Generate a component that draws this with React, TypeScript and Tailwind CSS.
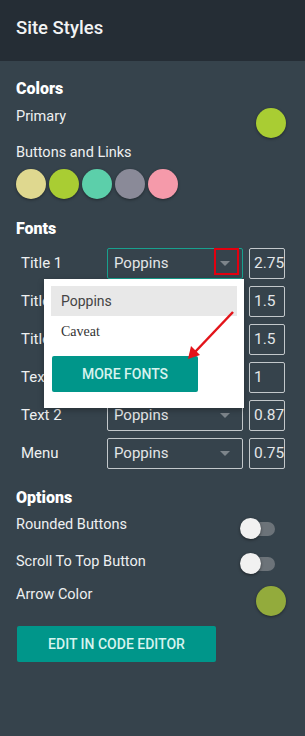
import React from "react";

const font = { fontFamily: "Roboto, 'Noto Sans', sans-serif" };

function Toggle() {
  return (
    <div className="relative w-[36px] h-[21px] flex items-center">
      <div className="absolute left-[2px] w-[33px] h-[14px] rounded-full bg-[#6c7379]" />
      <div className="absolute left-0 w-[21px] h-[21px] rounded-full bg-[#f1f1f1] shadow-[0_1px_3px_rgba(0,0,0,0.5)]" />
    </div>
  );
}

function Caret() {
  return (
    <svg width="10" height="6" viewBox="0 0 10 6" className="shrink-0">
      <path d="M0 0 L10 0 L5 5 Z" fill="#7d858b" />
    </svg>
  );
}

function FontRow({ label, value, active }: { label: string; value: string; active?: boolean }) {
  return (
    <div className="flex items-center h-[31px]">
      <div className="w-[91px] pl-[5px] text-[15px] text-[#eef0f1]">{label}</div>
      <div
        className={
          "w-[136px] h-[31px] border rounded-[2px] flex items-center justify-between pl-[6px] pr-[12px] " +
          (active ? "border-[#18a08e]" : "border-[#c3c8cb]")
        }
      >
        <span className="text-[15px] text-[#e3e6e8]">Poppins</span>
        <Caret />
      </div>
      <div className="ml-[6px] w-[36px] h-[31px] border border-[#c3c8cb] rounded-[2px] overflow-hidden flex items-center pl-[4px]">
        <span className="text-[15.5px] text-[#e3e6e8] whitespace-nowrap">{value}</span>
      </div>
    </div>
  );
}

export default function App() {
  return (
    <div className="relative w-[305px] h-[736px] bg-[#36434c] overflow-hidden" style={font}>
      <div className="h-[61px] bg-[#252d35] pl-4 pt-[16px]">
        <div className="text-[18.5px] leading-[24px] font-medium text-[#f2f3f4]">Site Styles</div>
      </div>
      <div className="pl-4 pr-[19px]">
        <div className="pt-[18px] text-[16px] leading-[20px] font-black text-white">Colors</div>
        <div className="mt-[9px] flex items-start justify-between">
          <span className="text-[14.5px] leading-[18px] text-[#eef0f1]">Primary</span>
          <div className="w-[30px] h-[30px] rounded-full bg-[#a9cd33] shadow-[0_1px_3px_rgba(0,0,0,0.4)]" />
        </div>
        <div className="mt-[6px] text-[14.5px] leading-[18px] text-[#eef0f1]">Buttons and Links</div>
        <div className="mt-[7px] flex gap-[3px]">
          {["#dfd88f", "#a9cd33", "#5ccfaa", "#8a8a98", "#f59aaa"].map((c) => (
            <div key={c} className="w-[30px] h-[30px] rounded-full shadow-[0_1px_3px_rgba(0,0,0,0.4)]" style={{ backgroundColor: c }} />
          ))}
        </div>
        <div className="mt-[20px] text-[16px] leading-[20px] font-black text-white">Fonts</div>
        <div className="mt-[9px] flex flex-col gap-[7px]">
          <FontRow label="Title 1" value="2.75" active />
          <FontRow label="Title 2" value="1.5" />
          <FontRow label="Title 3" value="1.5" />
          <FontRow label="Text 1" value="1" />
          <FontRow label="Text 2" value="0.875" />
          <FontRow label="Menu" value="0.75" />
        </div>
        <div className="mt-[19px] text-[16px] leading-[20px] font-black text-white">Options</div>
        <div className="mt-[8px] flex items-start justify-between pr-[10px]">
          <span className="text-[14.5px] leading-[18px] text-[#eef0f1]">Rounded Buttons</span>
          <div className="mt-[2px]"><Toggle /></div>
        </div>
        <div className="mt-[14px] flex items-start justify-between pr-[10px]">
          <span className="text-[14.5px] leading-[18px] text-[#eef0f1]">Scroll To Top Button</span>
          <Toggle />
        </div>
        <div className="mt-[12px] flex items-start justify-between">
          <span className="text-[14.5px] leading-[18px] text-[#eef0f1]">Arrow Color</span>
          <div className="w-[30px] h-[30px] rounded-full bg-[#93ab3c] shadow-[0_1px_3px_rgba(0,0,0,0.4)]" />
        </div>
        <div className="mt-[10px] ml-[1px] w-[199px] h-[36px] bg-[#00968a] rounded-[2px] flex items-center justify-center text-[14px] font-medium text-[#d6f3ee]">
          EDIT IN CODE EDITOR
        </div>
      </div>

      {/* Dropdown overlay */}
      <div className="absolute left-[44px] top-[279px] w-[200px] h-[129px] bg-white shadow-[0_2px_6px_rgba(0,0,0,0.3)] px-[7px] pt-[7px]">
        <div className="h-[30px] bg-[#e8e8e8] flex items-center pl-[10px] text-[14px] text-[#444]">Poppins</div>
        <div className="h-[30px] flex items-center pl-[10px] text-[14px] text-[#333]" style={{ fontFamily: "'Liberation Serif', serif" }}>
          Caveat
        </div>
        <div className="mt-[10px] ml-[1px] w-[146px] h-[36px] bg-[#00968a] rounded-[2px] flex items-center justify-center text-[14px] font-medium text-[#d6f3ee]">
          MORE FONTS
        </div>
      </div>

      {/* Red highlight box */}
      <div className="absolute left-[214px] top-[248px] w-[25px] h-[27px] border-2 border-[#e3000f]" />

      {/* Red arrow */}
      <svg className="absolute left-0 top-0" width="305" height="736" viewBox="0 0 305 736">
        <line x1="233" y1="312" x2="195" y2="352" stroke="#e3141a" strokeWidth="2.5" />
        <path d="M188 359 L191 346 L200 355 Z" fill="#e3141a" />
      </svg>
    </div>
  );
}
